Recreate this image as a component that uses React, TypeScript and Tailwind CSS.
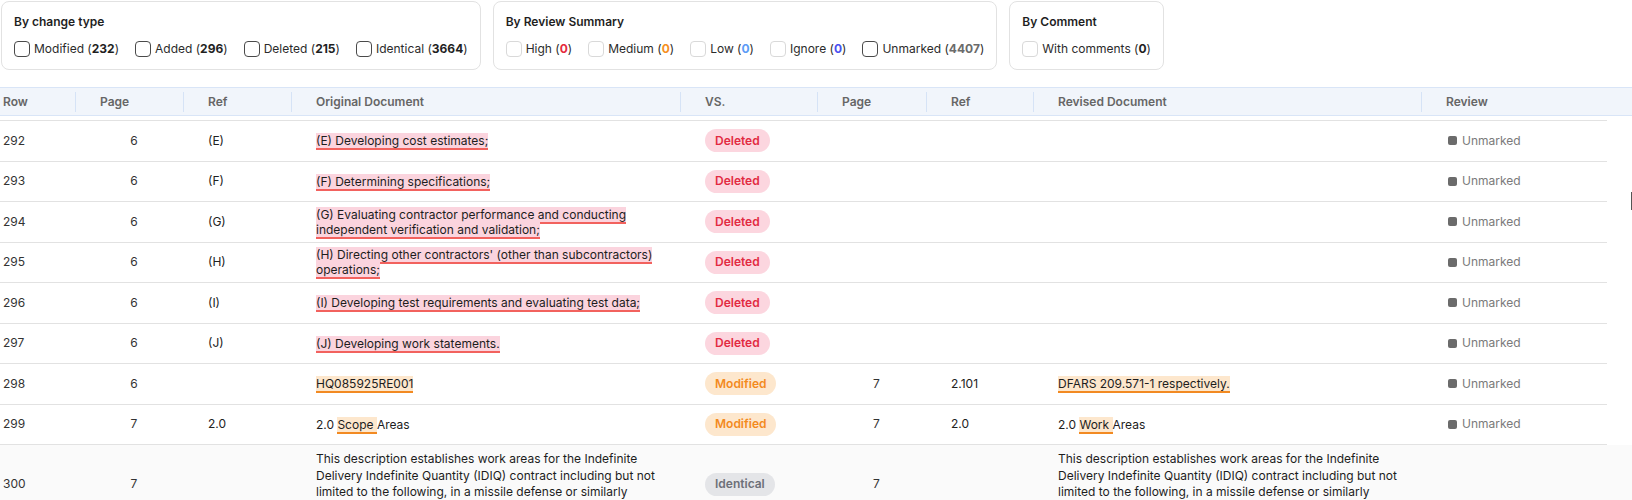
import React from "react";

type Seg = { t: string; hl?: "del" | "mod" };
type Status = "Deleted" | "Modified" | "Identical";

type Row = {
  row: number;
  page: string;
  ref: string;
  orig: Seg[];
  status: Status;
  page2: string;
  ref2: string;
  rev: Seg[];
  review: boolean;
};

const longText =
  "This description establishes work areas for the Indefinite Delivery Indefinite Quantity (IDIQ) contract including but not limited to the following, in a missile defense or similarly related applications:";

const rows: Row[] = [
  { row: 292, page: "6", ref: "(E)", orig: [{ t: "(E) Developing cost estimates;", hl: "del" }], status: "Deleted", page2: "", ref2: "", rev: [], review: true },
  { row: 293, page: "6", ref: "(F)", orig: [{ t: "(F) Determining specifications;", hl: "del" }], status: "Deleted", page2: "", ref2: "", rev: [], review: true },
  {
    row: 294,
    page: "6",
    ref: "(G)",
    orig: [{ t: "(G) Evaluating contractor performance and conducting independent verification and validation;", hl: "del" }],
    status: "Deleted",
    page2: "",
    ref2: "",
    rev: [],
    review: true,
  },
  {
    row: 295,
    page: "6",
    ref: "(H)",
    orig: [{ t: "(H) Directing other contractors' (other than subcontractors) operations;", hl: "del" }],
    status: "Deleted",
    page2: "",
    ref2: "",
    rev: [],
    review: true,
  },
  { row: 296, page: "6", ref: "(I)", orig: [{ t: "(I) Developing test requirements and evaluating test data;", hl: "del" }], status: "Deleted", page2: "", ref2: "", rev: [], review: true },
  { row: 297, page: "6", ref: "(J)", orig: [{ t: "(J) Developing work statements.", hl: "del" }], status: "Deleted", page2: "", ref2: "", rev: [], review: true },
  {
    row: 298,
    page: "6",
    ref: "",
    orig: [{ t: "HQ085925RE001", hl: "mod" }],
    status: "Modified",
    page2: "7",
    ref2: "2.101",
    rev: [{ t: "DFARS 209.571-1 respectively.", hl: "mod" }],
    review: true,
  },
  {
    row: 299,
    page: "7",
    ref: "2.0",
    orig: [{ t: "2.0 " }, { t: "Scope ", hl: "mod" }, { t: "Areas" }],
    status: "Modified",
    page2: "7",
    ref2: "2.0",
    rev: [{ t: "2.0 " }, { t: "Work ", hl: "mod" }, { t: "Areas" }],
    review: true,
  },
];

function Checkbox({ dim }: { dim?: boolean }) {
  return (
    <span
      className={
        dim
          ? "h-4 w-4 shrink-0 rounded-[4px] border border-[#d9d9d9] bg-white"
          : "h-4 w-4 shrink-0 rounded-[4px] border-[1.5px] border-[#4a4a4a] bg-white"
      }
    />
  );
}

function FilterItem({ label, count, countClass, dim }: { label: string; count: string; countClass: string; dim?: boolean }) {
  return (
    <span className="flex items-center gap-1">
      <Checkbox dim={dim} />
      <span className="text-[12px] text-[#2b2b2b]">
        {label} (<span className={`font-bold ${countClass}`}>{count}</span>)
      </span>
    </span>
  );
}

function FilterBox({ title, children }: { title: string; children: React.ReactNode }) {
  return (
    <div className="rounded-lg border border-[#e2e2e2] bg-white px-3 pt-3 pb-3">
      <div className="text-[12px] leading-4 font-semibold text-[#1f1f1f]">{title}</div>
      <div className="mt-[11px] flex h-4 items-center gap-4">{children}</div>
    </div>
  );
}

function Hl({ seg }: { seg: Seg }) {
  if (seg.hl === "del")
    return <span className="box-decoration-clone border-b-2 border-[#f2625e] bg-[#fbd4de]">{seg.t}</span>;
  if (seg.hl === "mod")
    return <span className="box-decoration-clone border-b-2 border-[#f28a22] bg-[#fde7cd]">{seg.t}</span>;
  return <span>{seg.t}</span>;
}

function Badge({ status }: { status: Status }) {
  if (status === "Deleted")
    return <span className="inline-flex h-[23px] items-center rounded-full bg-[#fcd6df] px-[10px] text-[12px] font-semibold text-[#e22a42]">Deleted</span>;
  if (status === "Modified")
    return <span className="inline-flex h-[23px] items-center rounded-full bg-[#fde7cd] px-[10px] text-[12px] font-semibold text-[#f38a1d]">Modified</span>;
  return <span className="inline-flex h-[23px] items-center rounded-full bg-[#e4e5e8] px-[10px] text-[12px] font-semibold text-[#6d7078]">Identical</span>;
}

function HeadCell({ label, w, first, last }: { label: string; w: string; first?: boolean; last?: boolean }) {
  return (
    <div className={`flex h-full items-center ${w}`}>
      <span className={first ? "flex-1 pl-[3px]" : "flex-1 pl-6"}>{label}</span>
      {!last && <span className="h-5 w-px bg-[#d6e3f6]" />}
    </div>
  );
}

function Cells({ r }: { r: Row }) {
  return (
    <>
      <div className="w-[76px] pl-[3px] text-[#333]">{r.row}</div>
      <div className="w-[108px] pl-2 text-center text-[#333]">{r.page}</div>
      <div className="w-[108px] pl-6 text-[#222]">{r.ref}</div>
      <div className="w-[389px] pr-4 pl-6 leading-[15px] text-[#1d1d1d]">
        {r.orig.map((s, i) => (
          <Hl key={i} seg={s} />
        ))}
      </div>
      <div className="w-[137px] pl-6">
        <Badge status={r.status} />
      </div>
      <div className="w-[109px] pl-2 text-center text-[#333]">{r.page2}</div>
      <div className="w-[107px] pl-6 text-[#222]">{r.ref2}</div>
      <div className="w-[388px] pr-4 pl-6 leading-[15px] text-[#1d1d1d]">
        {r.rev.map((s, i) => (
          <Hl key={i} seg={s} />
        ))}
      </div>
      <div className="w-[185px] pl-[26px]">
        {r.review && (
          <span className="flex items-center gap-[5px] text-[#7a7a7a]">
            <span className="h-[9px] w-[9px] rounded-[2px] bg-[#6b6b6b]" />
            Unmarked
          </span>
        )}
      </div>
    </>
  );
}

export default function App() {
  return (
    <div className="relative h-[500px] w-[1632px] overflow-hidden bg-white pt-px pl-px font-['Inter',sans-serif]">
      <div className="flex items-start gap-3">
        <FilterBox title="By change type">
          <FilterItem label="Modified" count="232" countClass="text-[#1f1f1f]" />
          <FilterItem label="Added" count="296" countClass="text-[#1f1f1f]" />
          <FilterItem label="Deleted" count="215" countClass="text-[#1f1f1f]" />
          <FilterItem label="Identical" count="3664" countClass="text-[#1f1f1f]" />
        </FilterBox>
        <FilterBox title="By Review Summary">
          <FilterItem label="High" count="0" countClass="text-[#e5293e]" dim />
          <FilterItem label="Medium" count="0" countClass="text-[#f5901f]" dim />
          <FilterItem label="Low" count="0" countClass="text-[#5b9cf7]" dim />
          <FilterItem label="Ignore" count="0" countClass="text-[#4b4ff0]" dim />
          <FilterItem label="Unmarked" count="4407" countClass="text-[#6b6b6b]" />
        </FilterBox>
        <FilterBox title="By Comment">
          <FilterItem label="With comments" count="0" countClass="text-[#1f1f1f]" dim />
        </FilterBox>
      </div>

      <div className="-ml-px mt-[17px]">
        <div className="h-[29px] w-full border-y border-[#d9e5f7] bg-[#f1f5fb] text-[12px] font-semibold text-[#666]">
          <div className="flex h-full w-[1607px]">
            <HeadCell label="Row" w="w-[76px]" first />
            <HeadCell label="Page" w="w-[108px]" />
            <HeadCell label="Ref" w="w-[108px]" />
            <HeadCell label="Original Document" w="w-[389px]" />
            <HeadCell label="VS." w="w-[137px]" />
            <HeadCell label="Page" w="w-[109px]" />
            <HeadCell label="Ref" w="w-[107px]" />
            <HeadCell label="Revised Document" w="w-[388px]" />
            <HeadCell label="Review" w="w-[185px]" last />
          </div>
        </div>

        <div className="h-[5px] w-[1607px] border-b border-[#e2e2e2]" />

        {rows.map((r) => (
          <div key={r.row} className="flex h-[40.5px] w-[1607px] items-center border-b border-[#e2e2e2] text-[12px]">
            <Cells r={r} />
          </div>
        ))}

        <div className="w-full bg-[#fafafa]">
          <div className="flex w-[1607px] items-center py-[6px] text-[12px]">
            <div className="w-[76px] pl-[3px] text-[#333]">300</div>
            <div className="w-[108px] pl-2 text-center text-[#333]">7</div>
            <div className="w-[108px] pl-6" />
            <div className="w-[389px] pr-4 pl-6 leading-[16.5px] text-[#1d1d1d]">{longText}</div>
            <div className="w-[137px] pl-6">
              <Badge status="Identical" />
            </div>
            <div className="w-[109px] pl-2 text-center text-[#333]">7</div>
            <div className="w-[107px] pl-6" />
            <div className="w-[388px] pr-4 pl-6 leading-[16.5px] text-[#1d1d1d]">{longText}</div>
            <div className="w-[185px]" />
          </div>
        </div>
      </div>

      {/* scrollbar sliver at the right edge */}
      <div className="absolute top-[192px] right-0 h-[18px] w-px bg-[#555]" />
    </div>
  );
}
